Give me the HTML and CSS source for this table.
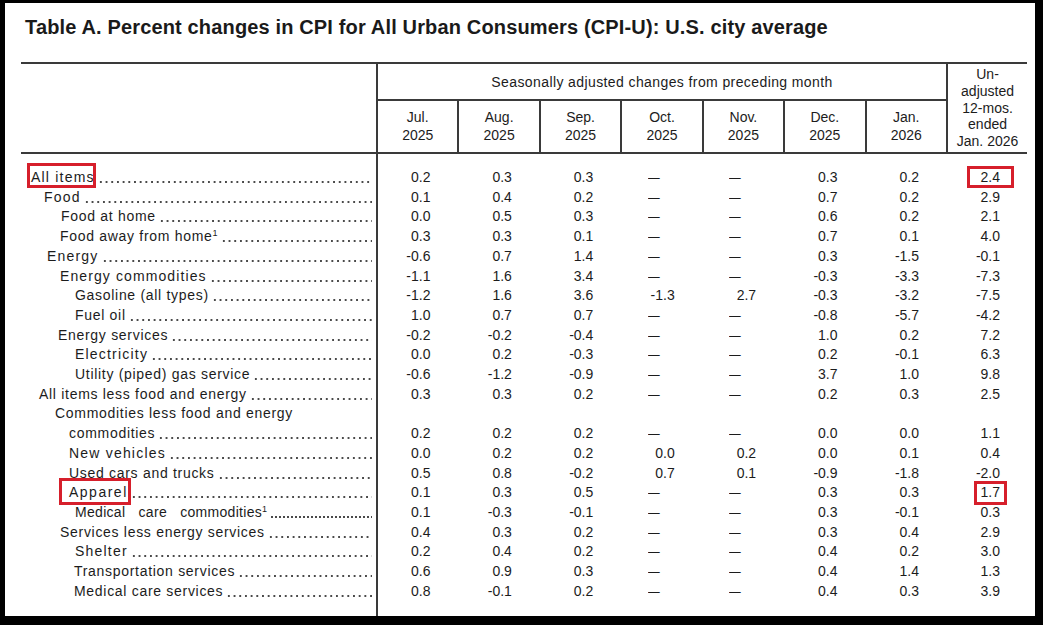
FILE: index.html
```html
<!DOCTYPE html>
<html lang="en">
<head>
<meta charset="utf-8">
<title>Table A. Percent changes in CPI</title>
<link rel="stylesheet" href="styles.css">
</head>
<body>
<div class="page">
  <h1 class="title">Table A. Percent changes in CPI for All Urban Consumers (CPI-U): U.S. city average</h1>
  <table class="cpi">
    <colgroup>
      <col class="c-stub"><col class="c-m"><col class="c-m"><col class="c-m"><col class="c-m"><col class="c-m"><col class="c-m"><col class="c-m"><col class="c-un">
    </colgroup>
    <thead>
      <tr class="h1">
        <th class="stub" rowspan="2"></th>
        <th class="sa" colspan="7">Seasonally adjusted changes from preceding month</th>
        <th class="un" rowspan="2">Un-<br>adjusted<br>12-mos.<br>ended<br>Jan. 2026</th>
      </tr>
      <tr class="h2">
        <th class="mo">Jul.<br>2025</th>
        <th class="mo">Aug.<br>2025</th>
        <th class="mo">Sep.<br>2025</th>
        <th class="mo">Oct.<br>2025</th>
        <th class="mo">Nov.<br>2025</th>
        <th class="mo">Dec.<br>2025</th>
        <th class="mo">Jan.<br>2026</th>
      </tr>
    </thead>
    <tbody>
      <tr class="first">
        <td class="lbl i0 w"><div class="ln"><span class="t box bx-all">All items</span><span class="dots"></span></div></td>
        <td>0.2</td><td>0.3</td><td>0.3</td><td class="na"><span class="d">–</span></td><td class="na"><span class="d">–</span></td><td>0.3</td><td>0.2</td><td class="u"><span class="box bx-24">2.4</span></td>
      </tr>
      <tr>
        <td class="lbl i1 w"><div class="ln"><span class="t">Food</span><span class="dots"></span></div></td>
        <td>0.1</td><td>0.4</td><td>0.2</td><td class="na"><span class="d">–</span></td><td class="na"><span class="d">–</span></td><td>0.7</td><td>0.2</td><td class="u">2.9</td>
      </tr>
      <tr>
        <td class="lbl i2a"><div class="ln"><span class="t">Food at home</span><span class="dots"></span></div></td>
        <td>0.0</td><td>0.5</td><td>0.3</td><td class="na"><span class="d">–</span></td><td class="na"><span class="d">–</span></td><td>0.6</td><td>0.2</td><td class="u">2.1</td>
      </tr>
      <tr>
        <td class="lbl i2"><div class="ln"><span class="t">Food away from home<sup>1</sup></span><span class="dots"></span></div></td>
        <td>0.3</td><td>0.3</td><td>0.1</td><td class="na"><span class="d">–</span></td><td class="na"><span class="d">–</span></td><td>0.7</td><td>0.1</td><td class="u">4.0</td>
      </tr>
      <tr>
        <td class="lbl i1b w"><div class="ln"><span class="t">Energy</span><span class="dots"></span></div></td>
        <td>-0.6</td><td>0.7</td><td>1.4</td><td class="na"><span class="d">–</span></td><td class="na"><span class="d">–</span></td><td>0.3</td><td>-1.5</td><td class="u">-0.1</td>
      </tr>
      <tr>
        <td class="lbl i2 m"><div class="ln"><span class="t">Energy commodities</span><span class="dots"></span></div></td>
        <td>-1.1</td><td>1.6</td><td>3.4</td><td class="na"><span class="d">–</span></td><td class="na"><span class="d">–</span></td><td>-0.3</td><td>-3.3</td><td class="u">-7.3</td>
      </tr>
      <tr>
        <td class="lbl i4"><div class="ln"><span class="t">Gasoline (all types)</span><span class="dots"></span></div></td>
        <td>-1.2</td><td>1.6</td><td>3.6</td><td>-1.3</td><td>2.7</td><td>-0.3</td><td>-3.2</td><td class="u">-7.5</td>
      </tr>
      <tr>
        <td class="lbl i4"><div class="ln"><span class="t">Fuel oil</span><span class="dots"></span></div></td>
        <td>1.0</td><td>0.7</td><td>0.7</td><td class="na"><span class="d">–</span></td><td class="na"><span class="d">–</span></td><td>-0.8</td><td>-5.7</td><td class="u">-4.2</td>
      </tr>
      <tr>
        <td class="lbl i2b"><div class="ln"><span class="t">Energy services</span><span class="dots"></span></div></td>
        <td>-0.2</td><td>-0.2</td><td>-0.4</td><td class="na"><span class="d">–</span></td><td class="na"><span class="d">–</span></td><td>1.0</td><td>0.2</td><td class="u">7.2</td>
      </tr>
      <tr>
        <td class="lbl i4 w"><div class="ln"><span class="t">Electricity</span><span class="dots"></span></div></td>
        <td>0.0</td><td>0.2</td><td>-0.3</td><td class="na"><span class="d">–</span></td><td class="na"><span class="d">–</span></td><td>0.2</td><td>-0.1</td><td class="u">6.3</td>
      </tr>
      <tr>
        <td class="lbl i4"><div class="ln"><span class="t">Utility (piped) gas service</span><span class="dots"></span></div></td>
        <td>-0.6</td><td>-1.2</td><td>-0.9</td><td class="na"><span class="d">–</span></td><td class="na"><span class="d">–</span></td><td>3.7</td><td>1.0</td><td class="u">9.8</td>
      </tr>
      <tr>
        <td class="lbl i0b"><div class="ln"><span class="t">All items less food and energy</span><span class="dots"></span></div></td>
        <td>0.3</td><td>0.3</td><td>0.2</td><td class="na"><span class="d">–</span></td><td class="na"><span class="d">–</span></td><td>0.2</td><td>0.3</td><td class="u">2.5</td>
      </tr>
      <tr>
        <td class="lbl i2c"><div class="ln1">Commodities less food and energy</div><div class="ln ln2"><span class="t">commodities</span><span class="dots"></span></div></td>
        <td>0.2</td><td>0.2</td><td>0.2</td><td class="na"><span class="d">–</span></td><td class="na"><span class="d">–</span></td><td>0.0</td><td>0.0</td><td class="u">1.1</td>
      </tr>
      <tr>
        <td class="lbl i3 w"><div class="ln"><span class="t">New vehicles</span><span class="dots"></span></div></td>
        <td>0.0</td><td>0.2</td><td>0.2</td><td>0.0</td><td>0.2</td><td>0.0</td><td>0.1</td><td class="u">0.4</td>
      </tr>
      <tr>
        <td class="lbl i3"><div class="ln"><span class="t">Used cars and trucks</span><span class="dots"></span></div></td>
        <td>0.5</td><td>0.8</td><td>-0.2</td><td>0.7</td><td>0.1</td><td>-0.9</td><td>-1.8</td><td class="u">-2.0</td>
      </tr>
      <tr>
        <td class="lbl i3 xw"><div class="ln"><span class="t box bx-app">Apparel</span><span class="dots"></span></div></td>
        <td>0.1</td><td>0.3</td><td>0.5</td><td class="na"><span class="d">–</span></td><td class="na"><span class="d">–</span></td><td>0.3</td><td>0.3</td><td class="u"><span class="box bx-17">1.7</span></td>
      </tr>
      <tr>
        <td class="lbl i4 sp"><div class="ln"><span class="t">Medical care commodities<sup>1</sup></span><span class="dots fine"></span></div></td>
        <td>0.1</td><td>-0.3</td><td>-0.1</td><td class="na"><span class="d">–</span></td><td class="na"><span class="d">–</span></td><td>0.3</td><td>-0.1</td><td class="u">0.3</td>
      </tr>
      <tr>
        <td class="lbl i2"><div class="ln"><span class="t">Services less energy services</span><span class="dots"></span></div></td>
        <td>0.4</td><td>0.3</td><td>0.2</td><td class="na"><span class="d">–</span></td><td class="na"><span class="d">–</span></td><td>0.3</td><td>0.4</td><td class="u">2.9</td>
      </tr>
      <tr>
        <td class="lbl i4 w"><div class="ln"><span class="t">Shelter</span><span class="dots"></span></div></td>
        <td>0.2</td><td>0.4</td><td>0.2</td><td class="na"><span class="d">–</span></td><td class="na"><span class="d">–</span></td><td>0.4</td><td>0.2</td><td class="u">3.0</td>
      </tr>
      <tr>
        <td class="lbl i3b"><div class="ln"><span class="t">Transportation services</span><span class="dots"></span></div></td>
        <td>0.6</td><td>0.9</td><td>0.3</td><td class="na"><span class="d">–</span></td><td class="na"><span class="d">–</span></td><td>0.4</td><td>1.4</td><td class="u">1.3</td>
      </tr>
      <tr>
        <td class="lbl i3b"><div class="ln"><span class="t">Medical care services</span><span class="dots"></span></div></td>
        <td>0.8</td><td>-0.1</td><td>0.2</td><td class="na"><span class="d">–</span></td><td class="na"><span class="d">–</span></td><td>0.4</td><td>0.3</td><td class="u">3.9</td>
      </tr>
      <tr class="end">
        <td class="lbl"></td><td></td><td></td><td></td><td></td><td></td><td></td><td></td><td></td>
      </tr>
    </tbody>
  </table>
</div>
</body>
</html>
```
FILE: styles.css
```css
* { box-sizing: border-box; }
html, body { margin: 0; padding: 0; }
body {
  background: #000;
  width: 1043px;
  height: 625px;
  overflow: hidden;
  font-family: "Liberation Sans", Arial, Helvetica, sans-serif;
  color: #1c1c1c;
}
.page {
  margin: 3px 0 0 5px;
  width: 1030px;
  height: 613px;
  background: #fff;
  padding: 12px 0 0 16px;
  overflow: hidden;
}
.title {
  margin: 0 0 0 4px;
  font-size: 20px;
  line-height: 24px;
  font-weight: bold;
  letter-spacing: 0.15px;
  color: #1a1a1a;
}
.cpi {
  margin-top: 23px;
  width: 1006px;
  border-collapse: collapse;
  table-layout: fixed;
  font-size: 14px;
}
.c-stub { width: 356px; }
.c-m { width: 81.43px; }
.c-un { width: 80px; }

.cpi th {
  font-weight: normal;
  padding: 0;
  text-align: center;
  vertical-align: middle;
  border-color: #3a3a3a;
}
.h1 th { border-top: 2px solid #3a3a3a; height: 37px; }
.h2 th { height: 53px; border-bottom: 2px solid #3a3a3a; }
.stub { border-right: 2px solid #3a3a3a; border-bottom: 2px solid #3a3a3a; }
.sa { border-bottom: 2px solid #3a3a3a; letter-spacing: 0.4px; }
.un { border-left: 2px solid #3a3a3a; border-bottom: 2px solid #3a3a3a; line-height: 16.8px; padding-top: 2px; }
.mo { border-left: 2px solid #3a3a3a; line-height: 17.5px; }

.cpi td {
  padding: 0 28px 0 0;
  line-height: 19.7px;
  text-align: right;
  vertical-align: bottom;
  white-space: nowrap;
}
.cpi td.u { padding-right: 27px; }
.cpi td.na { padding-right: 45px; }
.d { display: inline-block; transform: scaleX(1.5); }
.cpi .first td { padding-top: 14px; }
.cpi .end td { height: 15px; }

.cpi td.lbl {
  text-align: left;
  border-right: 2px solid #3a3a3a;
  padding-right: 4px;
  letter-spacing: 0.7px;
}
.ln { display: flex; }
.t { white-space: nowrap; }
.dots {
  flex: 1;
  margin-left: 3px;
  background: radial-gradient(circle, #4a4a4a 0.75px, transparent 1.1px) 0 13px / 5.7px 2px repeat-x;
}
.dots.fine { background-size: 4px 2px; }
sup { font-size: 9px; line-height: 0; vertical-align: 5px; letter-spacing: 0; }

.cpi td.i0 { padding-left: 10px; }
.cpi td.i0b { padding-left: 18px; }
.cpi td.i1 { padding-left: 23px; }
.cpi td.i1b { padding-left: 26px; }
.cpi td.i2 { padding-left: 39px; }
.cpi td.i2a { padding-left: 40px; }
.cpi td.i2b { padding-left: 37px; }
.cpi td.i2c { padding-left: 34px; }
.cpi td.i3 { padding-left: 48px; }
.cpi td.i3b { padding-left: 53px; }
.cpi td.i4 { padding-left: 54px; }
.ln2 { padding-left: 14px; }

.cpi td.w { letter-spacing: 1.2px; }
.cpi td.m { letter-spacing: 1.1px; }
.cpi td.xw { letter-spacing: 1.5px; }
.cpi td.sp { letter-spacing: 0.3px; word-spacing: 9px; }

.box { position: relative; }
.box::after {
  content: "";
  position: absolute;
  border: 3px solid #d61f2b;
}
.bx-all::after { left: -4px; right: -1px; top: -5px; bottom: 0; }
.bx-app::after { left: -10px; right: -3px; top: -5px; bottom: -2px; }
.bx-24::after { left: -14px; right: -14px; top: -3px; bottom: -3px; }
.bx-17::after { left: -7px; right: -7px; top: -3px; bottom: -5px; }
```
